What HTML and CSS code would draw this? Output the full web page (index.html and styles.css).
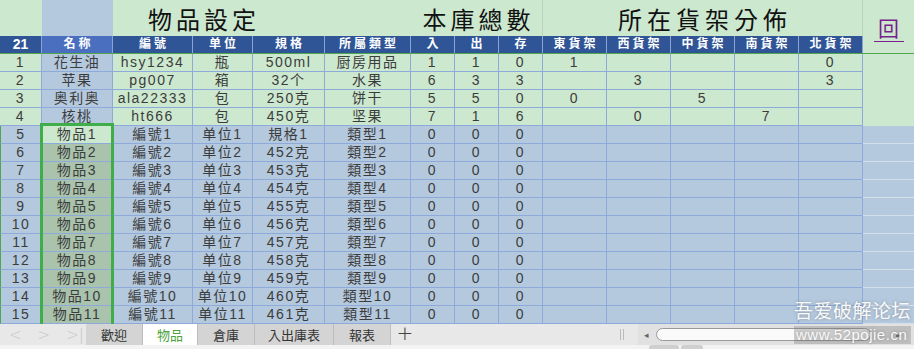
FILE: index.html
```html
<!DOCTYPE html>
<html lang="zh-Hant">
<head>
    <meta charset="UTF-8">
    <meta name="viewport" content="width=device-width, initial-scale=1.0">
    <title>物品設定</title>
    <link rel="stylesheet" href="styles.css">
</head>
<body>

    <div class="sheet">
        <div class="head">
            <div class="t"></div>
            <div class="t nm"></div>
            <div class="t big first">物品設定</div>
            <div class="t big stock">本庫總數</div>
            <div class="t big shelf">所在貨架分佈</div>
            <div class="back"><span>回</span></div>

            <div class="h corner">21</div>
            <div class="h sel">名称</div>
            <div class="h">編號</div>
            <div class="h">单位</div>
            <div class="h">規格</div>
            <div class="h">所屬類型</div>
            <div class="h">入</div>
            <div class="h">出</div>
            <div class="h">存</div>
            <div class="h">東貨架</div>
            <div class="h">西貨架</div>
            <div class="h">中貨架</div>
            <div class="h">南貨架</div>
            <div class="h">北貨架</div>
        </div>

        <!-- 已登錄的物品 -->
        <div class="row g"><div>1</div><div class="nm">花生油</div><div>hsy1234</div><div>瓶</div><div>500ml</div><div>厨房用品</div><div>1</div><div>1</div><div>0</div><div>1</div><div></div><div></div><div></div><div>0</div><div class="ex"></div></div>
        <div class="row g"><div>2</div><div class="nm">苹果</div><div>pg007</div><div>箱</div><div>32个</div><div>水果</div><div>6</div><div>3</div><div>3</div><div></div><div>3</div><div></div><div></div><div>3</div><div class="ex"></div></div>
        <div class="row g"><div>3</div><div class="nm">奥利奥</div><div>ala22333</div><div>包</div><div>250克</div><div>饼干</div><div>5</div><div>5</div><div>0</div><div>0</div><div></div><div>5</div><div></div><div></div><div class="ex"></div></div>
        <div class="row g"><div>4</div><div class="nm">核桃</div><div>ht666</div><div>包</div><div>450克</div><div>坚果</div><div>7</div><div>1</div><div>6</div><div></div><div>0</div><div></div><div>7</div><div></div><div class="ex"></div></div>

        <!-- 範本列 -->
        <div class="row b"><div class="no">5</div><div class="nm on">物品1</div><div>編號1</div><div>单位1</div><div>規格1</div><div>類型1</div><div>0</div><div>0</div><div>0</div><div></div><div></div><div></div><div></div><div></div><div class="ex"></div></div>
        <div class="row b"><div class="no">6</div><div class="nm">物品2</div><div>編號2</div><div>单位2</div><div>452克</div><div>類型2</div><div>0</div><div>0</div><div>0</div><div></div><div></div><div></div><div></div><div></div><div class="ex"></div></div>
        <div class="row b"><div class="no">7</div><div class="nm">物品3</div><div>編號3</div><div>单位3</div><div>453克</div><div>類型3</div><div>0</div><div>0</div><div>0</div><div></div><div></div><div></div><div></div><div></div><div class="ex"></div></div>
        <div class="row b"><div class="no">8</div><div class="nm">物品4</div><div>編號4</div><div>单位4</div><div>454克</div><div>類型4</div><div>0</div><div>0</div><div>0</div><div></div><div></div><div></div><div></div><div></div><div class="ex"></div></div>
        <div class="row b"><div class="no">9</div><div class="nm">物品5</div><div>編號5</div><div>单位5</div><div>455克</div><div>類型5</div><div>0</div><div>0</div><div>0</div><div></div><div></div><div></div><div></div><div></div><div class="ex"></div></div>
        <div class="row b"><div class="no">10</div><div class="nm">物品6</div><div>編號6</div><div>单位6</div><div>456克</div><div>類型6</div><div>0</div><div>0</div><div>0</div><div></div><div></div><div></div><div></div><div></div><div class="ex"></div></div>
        <div class="row b"><div class="no">11</div><div class="nm">物品7</div><div>編號7</div><div>单位7</div><div>457克</div><div>類型7</div><div>0</div><div>0</div><div>0</div><div></div><div></div><div></div><div></div><div></div><div class="ex"></div></div>
        <div class="row b"><div class="no">12</div><div class="nm">物品8</div><div>編號8</div><div>单位8</div><div>458克</div><div>類型8</div><div>0</div><div>0</div><div>0</div><div></div><div></div><div></div><div></div><div></div><div class="ex"></div></div>
        <div class="row b"><div class="no">13</div><div class="nm">物品9</div><div>編號9</div><div>单位9</div><div>459克</div><div>類型9</div><div>0</div><div>0</div><div>0</div><div></div><div></div><div></div><div></div><div></div><div class="ex"></div></div>
        <div class="row b"><div class="no">14</div><div class="nm">物品10</div><div>編號10</div><div>单位10</div><div>460克</div><div>類型10</div><div>0</div><div>0</div><div>0</div><div></div><div></div><div></div><div></div><div></div><div class="ex"></div></div>
        <div class="row b"><div class="no">15</div><div class="nm">物品11</div><div>編號11</div><div>单位11</div><div>461克</div><div>類型11</div><div>0</div><div>0</div><div>0</div><div></div><div></div><div></div><div></div><div></div><div class="ex"></div></div>

        <div class="selection"></div>
    </div>

    <div class="tabbar">
        <div class="nav">
            <span>&lt;</span><span>&gt;</span><span>&gt;|</span>
        </div>
        <div class="tab">歡迎</div>
        <div class="tab active">物品</div>
        <div class="tab">倉庫</div>
        <div class="tab wide">入出庫表</div>
        <div class="tab">報表</div>
        <div class="add">+</div>
        <div class="spacer"></div>
        <div class="grip"></div>
        <div class="scroll">
            <span class="arrow">◂</span>
            <div class="thumb"></div>
            <span class="arrow right">▸</span>
        </div>
    </div>
    <div class="strip">
        <span class="pill"></span><span class="pill short"></span>
    </div>

    <div class="watermark">
        <div class="wm-name">吾爱破解论坛</div>
        <div class="wm-url">www.52pojie.cn</div>
    </div>

</body>
</html>
```

FILE: styles.css
```css
* {
    box-sizing: border-box;
}

body {
    --cols: 42px 71px 80px 60px 72px 86px 44px 44px 44px 64px 64px 64px 64px 64px 51px;
    margin: 0;
    width: 914px;
    height: 349px;
    overflow: hidden;
    position: relative;
    font-family: "Liberation Sans", "Noto Sans CJK TC", sans-serif;
    background-color: #f3f3f3;
}

.sheet {
    position: relative;
    height: 324px;
    overflow: hidden;
}

/* 標題 + 欄位名稱 */
.head {
    display: grid;
    grid-template-columns: var(--cols);
    grid-template-rows: 36px 17px;
    border-bottom: 1px solid #4fa64f;
    background-color: #cce8cf;
}

.t {
    display: flex;
    align-items: center;
}

.t.nm {
    background-color: #b4c9de;
}

.big {
    font-family: "Noto Sans CJK TC", sans-serif;
    font-size: 24px;
    color: #111;
    letter-spacing: 4px;
}

.first {
    grid-column: span 4;
    padding-left: 35px;
}

.stock {
    grid-column: span 3;
    justify-content: center;
    padding-left: 4px;
    border-right: 1px solid #b8d4bb;
}

.shelf {
    grid-column: span 5;
    justify-content: center;
    letter-spacing: 5px;
    padding-left: 5px;
    border-right: 1px solid #b8d4bb;
}

.back {
    grid-column: 15;
    grid-row: 1 / 3;
    display: flex;
    justify-content: center;
    padding-top: 15px;
}

.back span {
    display: inline-block;
    width: 30px;
    height: 27px;
    text-align: center;
    font-family: "Noto Sans CJK TC", sans-serif;
    font-size: 21px;
    line-height: 24px;
    color: #7a1f8c;
    border-bottom: 1px solid #7a1f8c;
}

.h {
    background-color: #2f5597;
    color: white;
    font-weight: bold;
    font-size: 12px;
    line-height: 17px;
    letter-spacing: 3px;
    padding-left: 3px;
    text-align: center;
    border-right: 1px solid #8aa3d4;
}

.h.corner {
    font-size: 14px;
    letter-spacing: 0;
    padding-left: 0;
}

.h.sel {
    background-color: #4a6fbf;
}

/* 資料列 */
.row {
    display: grid;
    grid-template-columns: var(--cols);
    height: 18px;
}

.row > div {
    border-right: 1px solid #8eaadb;
    border-bottom: 1px solid #8eaadb;
    font-size: 14px;
    line-height: 17px;
    color: #3c3c3c;
    text-align: center;
    letter-spacing: 1.5px;
    white-space: nowrap;
    overflow: hidden;
}

.row.g {
    background-color: #cce8cf;
}

.row.g .nm {
    background-color: #b4c9de;
}

.row.b {
    background-color: #b4c9de;
}

.row.b .nm {
    background-color: #a9c3ac;
}

.row.b .nm.on {
    background-color: #cce8cf;
}

.row.b .no {
    border-left: 1px solid #4fa64f;
}

.row > .ex {
    border-right: none;
    border-bottom: none;
}

.row.b > .ex {
    border-bottom: 1px solid #d5dfea;
}

.selection {
    position: absolute;
    left: 40px;
    top: 123px;
    width: 74px;
    height: 220px;
    border: 3px solid #3fae49;
    pointer-events: none;
}

/* 工作表標籤 */
.tabbar {
    display: flex;
    height: 21px;
    background-color: #e8e8e8;
    font-family: "Noto Sans CJK TC", sans-serif;
    font-size: 13px;
    color: #333;
}

.nav {
    width: 86px;
    display: flex;
    align-items: center;
    gap: 16px;
    padding-left: 9px;
    color: #c6c6c6;
    font-family: "DejaVu Sans", sans-serif;
    font-size: 15px;
    font-weight: 200;
}

.tab {
    width: 57px;
    line-height: 21px;
    text-align: center;
    background-color: #d4d4d4;
    border-right: 1px solid #bdbdbd;
}

.tab.active {
    width: 55px;
    background-color: white;
    color: #4ca23a;
}

.tab.wide {
    width: 79px;
}

.add {
    width: 28px;
    text-align: center;
    font-family: "DejaVu Sans", sans-serif;
    font-size: 20px;
    font-weight: 200;
    line-height: 19px;
    color: #444;
}

.spacer {
    flex: 1;
}

.grip {
    width: 4px;
    margin: 5px 14px 5px 0;
    border-left: 1px solid #bbb;
    border-right: 1px solid #bbb;
}

.scroll {
    width: 276px;
    display: flex;
    align-items: center;
    padding: 0 6px;
    background-color: #e1e1e1;
    color: #666;
    font-size: 9px;
}

.arrow {
    width: 12px;
}

.thumb {
    width: 215px;
    height: 13px;
    background-color: #fafafa;
    border: 1px solid #9a9a9a;
    border-radius: 7px;
}

.arrow.right {
    margin-left: auto;
}

.strip {
    height: 4px;
    display: flex;
    gap: 2px;
    padding-left: 649px;
}

.pill {
    width: 30px;
    height: 6px;
    background-color: #cfcfcf;
    border-radius: 3px;
}

.pill.short {
    width: 22px;
}

/* 浮水印 */
.watermark {
    position: absolute;
    left: 794px;
    top: 298px;
    color: rgba(255, 255, 255, 0.95);
    text-shadow: 0 0 3px rgba(90, 90, 90, 0.5);
    pointer-events: none;
}

.wm-name {
    font-family: "Noto Sans CJK SC", sans-serif;
    font-size: 19px;
    line-height: 24px;
    letter-spacing: 0.5px;
}

.wm-url {
    margin-top: 4px;
    padding: 0 2px;
    font-size: 15px;
    line-height: 18px;
    letter-spacing: 0.5px;
    background-color: rgba(110, 110, 110, 0.3);
}
```
